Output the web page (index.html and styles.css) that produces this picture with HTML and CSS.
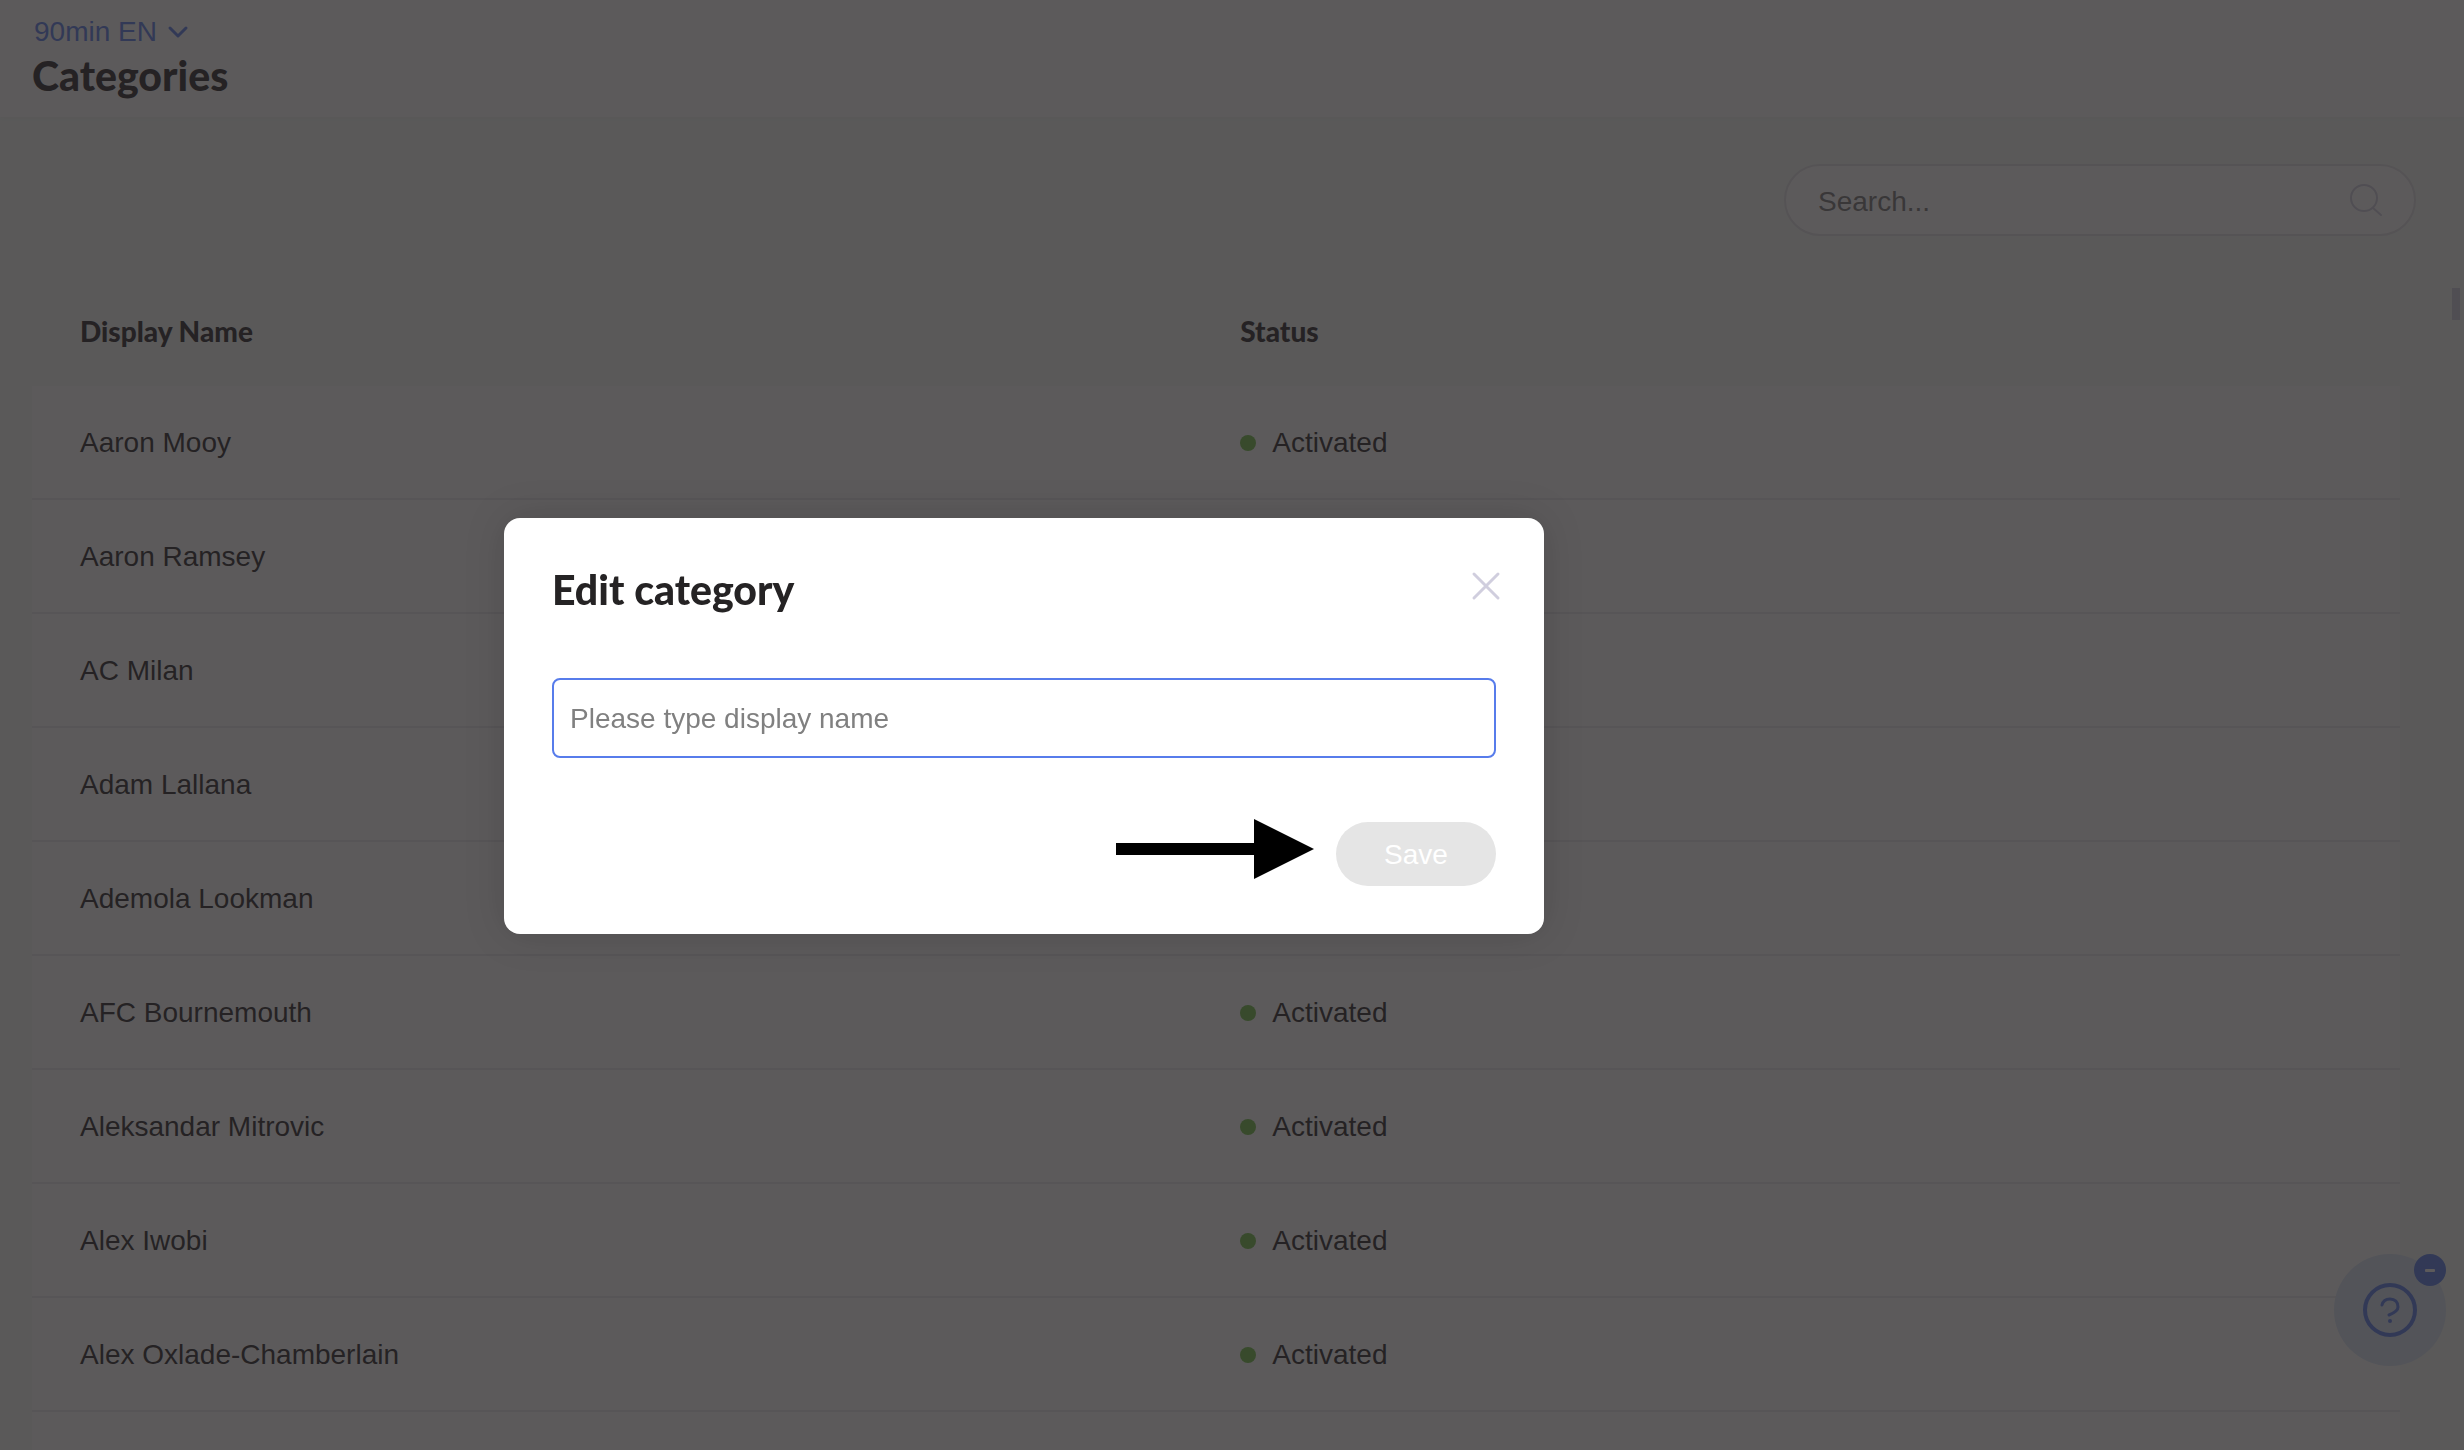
FILE: index.html
```html
<!DOCTYPE html>
<html lang="en">

<head>
    <meta charset="UTF-8" />
    <meta name="viewport" content="width=device-width, initial-scale=1" />
    <title>Categories</title>
    <link rel="stylesheet" href="styles.css">
</head>

<body>

    <!-- Page Header -->
    <header class="page-header">
        <button class="property-switch" type="button">
            90min EN
            <svg width="22" height="14" viewBox="0 0 22 14"><path d="M3 3l8 8 8-8" /></svg>
        </button>
        <h1>Categories</h1>
    </header>

    <!-- Categories List -->
    <main class="content">
        <form class="search">
            <input type="search" placeholder="Search..." aria-label="Search">
            <svg width="36" height="36" viewBox="0 0 36 36"><circle cx="16" cy="16" r="13" /><path d="M25 26l8 7" /></svg>
        </form>

        <table class="categories">
            <thead>
                <tr><th class="name-col">Display Name</th><th>Status</th></tr>
            </thead>
            <tbody>
                <tr><td>Aaron Mooy</td><td><span class="status">Activated</span></td></tr>
                <tr><td>Aaron Ramsey</td><td></td></tr>
                <tr><td>AC Milan</td><td></td></tr>
                <tr><td>Adam Lallana</td><td></td></tr>
                <tr><td>Ademola Lookman</td><td></td></tr>
                <tr><td>AFC Bournemouth</td><td><span class="status">Activated</span></td></tr>
                <tr><td>Aleksandar Mitrovic</td><td><span class="status">Activated</span></td></tr>
                <tr><td>Alex Iwobi</td><td><span class="status">Activated</span></td></tr>
                <tr><td>Alex Oxlade-Chamberlain</td><td><span class="status">Activated</span></td></tr>
                <tr><td></td><td></td></tr>
            </tbody>
        </table>
        <div class="scroll-thumb"></div>
    </main>

    <!-- Help Widget -->
    <div class="help">
        <button class="help-open" type="button" aria-label="Help">
            <svg width="56" height="56" viewBox="0 0 56 56">
                <circle class="ring" cx="28" cy="28" r="25" />
                <path class="mark" d="M20 23c1-4 4-6 8-6 5 0 8 3 8 8 0 4-4 6-9 8" />
                <circle class="dot" cx="28" cy="39" r="2" />
            </svg>
        </button>
        <button class="help-hide" type="button" aria-label="Hide help"></button>
    </div>

    <!-- Edit Category Modal -->
    <div class="overlay">
        <form class="modal" role="dialog" aria-labelledby="modal-title">
            <div class="modal-header">
                <h2 id="modal-title">Edit category</h2>
                <button class="close" type="button" aria-label="Close">
                    <svg width="32" height="32" viewBox="0 0 32 32"><path d="M4 4l24 24M28 4L4 28" /></svg>
                </button>
            </div>
            <input class="name-input" type="text" placeholder="Please type display name" aria-label="Display name">
            <div class="modal-footer">
                <svg class="arrow" width="198" height="60" viewBox="0 0 198 60"><path d="M0 24h138V0l60 30-60 30V36H0z" /></svg>
                <button class="save" type="submit" disabled>Save</button>
            </div>
        </form>
    </div>

</body>

</html>
```

FILE: styles.css
```css
* {
    box-sizing: border-box;
}

body {
    display: flex;
    flex-direction: column;
    font-family: "Liberation Sans", Arial, sans-serif;
    font-size: 28px;
    line-height: 32px;
    background-color: #f5fbf7;
    color: #252324;
    margin: 0;
    height: 100vh;
    overflow: hidden;
}

button,
input {
    font: inherit;
}

button {
    border: none;
    padding: 0;
    cursor: pointer;
}

h1,
h2 {
    font-family: Lato, sans-serif;
    font-size: 41px;
    font-weight: 900;
    line-height: 48px;
    margin: 0;
}

/* Header */
.page-header {
    flex-shrink: 0;
    background-color: #fff;
    height: 117px;
    padding: 16px 32px;
    box-shadow: 0 0 6px rgba(0, 0, 0, 0.04);
}

.property-switch {
    display: flex;
    align-items: center;
    gap: 10px;
    padding-left: 2px;
    margin-bottom: 4px;
    background: none;
    color: #577ceb;
}

.property-switch svg {
    fill: none;
    stroke: #577ceb;
    stroke-width: 3;
    stroke-linecap: round;
    stroke-linejoin: round;
}

/* List */
.content {
    position: relative;
    flex: 1;
    min-height: 0;
    overflow: hidden;
    padding: 47px 64px 0 32px;
}

.search {
    display: flex;
    align-items: center;
    width: 632px;
    height: 72px;
    margin-left: auto;
    margin-right: -16px;
    padding: 0 30px 0 32px;
    background-color: #fff;
    border: 2px solid #e3e1e5;
    border-radius: 36px;
}

.search input {
    flex: 1;
    min-width: 0;
    padding: 3px 0 0;
    border: none;
    outline: none;
    background: none;
}

.search input::placeholder {
    color: #757575;
}

.search svg {
    fill: none;
    stroke: #d0cede;
    stroke-width: 2;
    stroke-linecap: round;
}

.categories {
    width: 100%;
    margin-top: 40px;
    border-collapse: separate;
    border-spacing: 0;
    text-align: left;
}

.categories th {
    height: 110px;
    padding: 0 48px;
    font-family: Lato, sans-serif;
    font-weight: 900;
}

.categories .name-col {
    width: 49%;
}

.categories td {
    height: 114px;
    padding: 2px 48px 0;
    background-color: #fff;
    border-bottom: 2px solid #ebe9ed;
}

.status {
    display: flex;
    align-items: center;
    gap: 16px;
}

.status::before {
    content: "";
    width: 16px;
    height: 16px;
    border-radius: 50%;
    background-color: #6fbf44;
}

.scroll-thumb {
    position: absolute;
    top: 171px;
    right: 4px;
    width: 8px;
    height: 32px;
    background-color: #d0cede;
}

/* Help widget */
.help {
    position: fixed;
    right: 18px;
    bottom: 84px;
}

.help-open {
    display: flex;
    align-items: center;
    justify-content: center;
    width: 112px;
    height: 112px;
    border-radius: 50%;
    background-color: #dae6f7;
}

.help .ring,
.help .mark {
    fill: none;
    stroke: #577ceb;
    stroke-width: 4;
}

.help .mark {
    stroke-width: 3;
    stroke-linecap: round;
}

.help .dot {
    fill: #577ceb;
}

.help-hide {
    position: absolute;
    top: 0;
    right: 0;
    display: flex;
    align-items: center;
    justify-content: center;
    width: 32px;
    height: 32px;
    border-radius: 50%;
    background-color: #577ceb;
}

.help-hide::before {
    content: "";
    width: 10px;
    height: 3px;
    border-radius: 1px;
    background-color: #fff;
}

/* Modal */
.overlay {
    position: fixed;
    inset: 0;
    display: flex;
    align-items: center;
    justify-content: center;
    padding-top: 2px;
    padding-right: 416px;
    background-color: rgba(37, 35, 36, 0.75);
}

.modal {
    width: 1040px;
    padding: 48px;
    background-color: #fff;
    border-radius: 16px;
    box-shadow: 0 0 40px rgba(0, 0, 0, 0.15);
}

.modal-header {
    display: flex;
    justify-content: space-between;
    height: 112px;
}

.close {
    height: 32px;
    margin-top: 4px;
    margin-right: -6px;
    background: none;
}

.close svg {
    display: block;
    fill: none;
    stroke: #d0cede;
    stroke-width: 3;
    stroke-linecap: round;
}

.name-input {
    display: block;
    width: 100%;
    height: 80px;
    padding: 2px 16px 0;
    border: 2px solid #577ceb;
    border-radius: 8px;
    outline: none;
}

.name-input::placeholder {
    color: #808080;
}

.modal-footer {
    position: relative;
    display: flex;
    justify-content: flex-end;
    margin-top: 64px;
}

.arrow {
    position: absolute;
    top: -3px;
    right: 182px;
}

.save {
    width: 160px;
    height: 64px;
    padding-top: 2px;
    border-radius: 32px;
    background-color: #e5e5e5;
    color: #fff;
}
```
